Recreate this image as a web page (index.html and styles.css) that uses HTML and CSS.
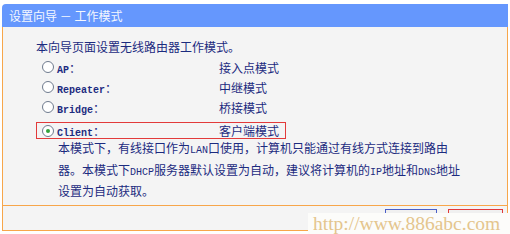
FILE: index.html
```html
<!DOCTYPE html>
<html lang="zh-CN">
<head>
<meta charset="utf-8">
<title>设置向导 - 工作模式</title>
<link rel="stylesheet" href="styles.css">
</head>
<body>
<div class="panel">
  <div class="title">设置向导 － 工作模式</div>
  <div class="body">
    <div class="intro">本向导页面设置无线路由器工作模式。</div>
    <div class="row">
      <span class="radio"></span>
      <span class="label"><span class="en">AP</span>：</span>
      <span class="mode">接入点模式</span>
    </div>
    <div class="row">
      <span class="radio"></span>
      <span class="label"><span class="en">Repeater</span>：</span>
      <span class="mode">中继模式</span>
    </div>
    <div class="row">
      <span class="radio"></span>
      <span class="label"><span class="en">Bridge</span>：</span>
      <span class="mode">桥接模式</span>
    </div>
    <div class="row row-selected">
      <span class="radio radio-checked"></span>
      <span class="label"><span class="en">Client</span>：</span>
      <span class="mode">客户端模式</span>
    </div>
    <div class="desc">本模式下，有线接口作为<span class="en-desc">LAN</span>口使用，计算机只能通过有线方式连接到路由<br>器。本模式下<span class="en-desc">DHCP</span>服务器默认设置为自动，建议将计算机的<span class="en-desc">IP</span>地址和<span class="en-desc">DNS</span>地址<br>设置为自动获取。</div>
  </div>
  <div class="footer">
    <span class="btn btn-back"></span>
    <span class="btn btn-next"></span>
  </div>
</div>
<div class="watermark">http://www.886abc.com</div>
</body>
</html>
```
FILE: styles.css
```css
html, body {
  margin: 0;
  padding: 0;
  background: #ffffff;
}
body {
  width: 510px;
  height: 234px;
  position: relative;
  overflow: hidden;
  font-family: "Noto Sans CJK SC", "Noto Sans", sans-serif;
  font-size: 12px;
  color: #1c2b7f;
}
.panel {
  margin: 4px 2px 0 2px;
  width: 506px;
}
.title {
  height: 23px;
  line-height: 23px;
  background: #6597fd;
  color: #f4f7ff;
  padding-left: 7px;
  border-top-left-radius: 4px;
  font-size: 12px;
}
.body {
  box-sizing: border-box;
  height: 178px;
  background: #f4f4f4;
  border-left: 1px solid #f7a64a;
  border-right: 1px solid #f7a64a;
  padding: 10px 0 0 33px;
}
.intro {
  line-height: 20px;
  height: 20px;
}
.row {
  box-sizing: border-box;
  width: 250px;
  height: 20px;
  border: 1px solid transparent;
  padding-left: 5px;
  display: flex;
  align-items: center;
}
.row-selected {
  height: 17px;
  margin-top: 5px;
  border-color: #e23a3a;
}
.radio {
  box-sizing: border-box;
  width: 12px;
  height: 12px;
  border: 1px solid #6f7b8e;
  border-radius: 50%;
  background: #ffffff;
  margin-right: 3px;
  display: flex;
  align-items: center;
  justify-content: center;
  flex: none;
}
.radio-checked::after {
  content: "";
  width: 4px;
  height: 4px;
  border-radius: 50%;
  background: #34a23c;
}
.label {
  width: 162px;
  flex: none;
}
.en {
  font-family: "Liberation Mono", monospace;
  font-size: 10px;
  font-weight: bold;
}
.en-desc {
  font-family: "Liberation Mono", monospace;
  font-size: 10px;
}
.desc {
  margin-left: 22px;
  line-height: 18.5px;
  white-space: nowrap;
}
.footer {
  box-sizing: border-box;
  height: 26px;
  background: #f4f4f4;
  border: 1px solid #f7a64a;
  display: flex;
  justify-content: flex-end;
  align-items: flex-start;
  gap: 11px;
  padding: 3px 4px 0 0;
}
.btn {
  box-sizing: border-box;
  height: 20px;
  background: #f0f0f0;
}
.btn-back {
  width: 52px;
  border: 1px solid #4a5fc8;
}
.btn-next {
  width: 55px;
  border: 1px solid #e23a3a;
}
.watermark {
  position: absolute;
  left: 308px;
  top: 213px;
  width: 202px;
  height: 21px;
  background: #fcfcfa;
  color: #e4c58d;
  font-family: "Liberation Serif", serif;
  font-size: 19.5px;
  line-height: 21px;
  padding-left: 5px;
  box-sizing: border-box;
  white-space: nowrap;
}
```
